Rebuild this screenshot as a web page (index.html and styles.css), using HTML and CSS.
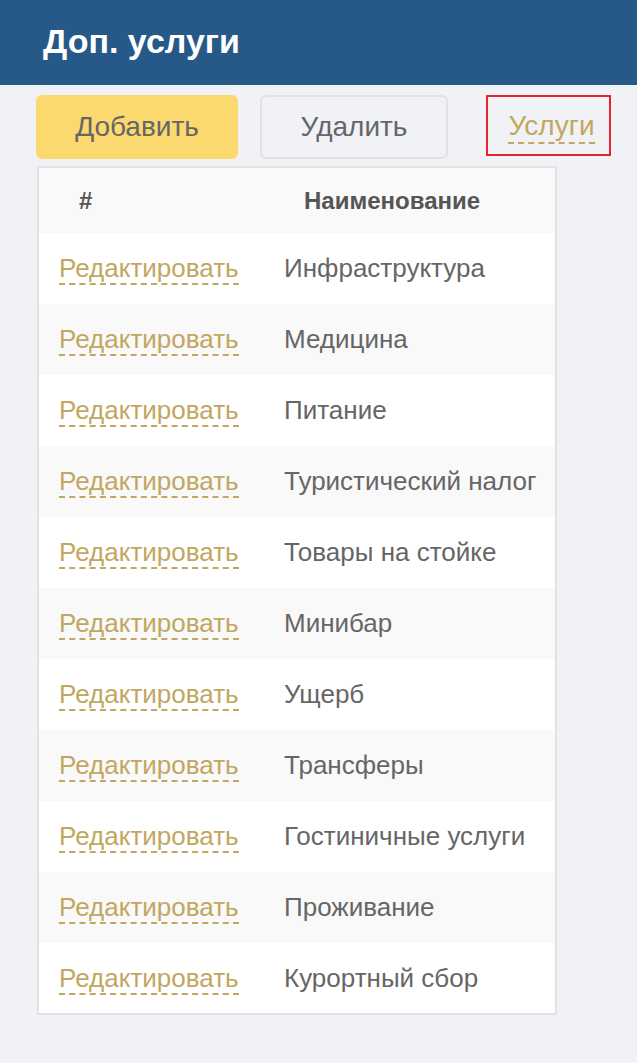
FILE: index.html
```html
<!DOCTYPE html>
<html lang="ru">
<head>
<meta charset="utf-8">
<link rel="stylesheet" href="styles.css">
</head>
<body>
<header class="topbar"><h1 class="title">Доп. услуги</h1></header>
<main class="content">
  <div class="toolbar">
    <button class="btn btn-add">Добавить</button>
    <button class="btn btn-del">Удалить</button>
    <div class="svc-box"><span class="link svc-link">Услуги</span></div>
  </div>
  <table class="grid">
    <thead>
      <tr><th class="col-num">#</th><th class="col-name">Наименование</th></tr>
    </thead>
    <tbody>
      <tr><td class="col-num"><span class="link">Редактировать</span></td><td class="col-name">Инфраструктура</td></tr>
      <tr><td class="col-num"><span class="link">Редактировать</span></td><td class="col-name">Медицина</td></tr>
      <tr><td class="col-num"><span class="link">Редактировать</span></td><td class="col-name">Питание</td></tr>
      <tr><td class="col-num"><span class="link">Редактировать</span></td><td class="col-name">Туристический налог</td></tr>
      <tr><td class="col-num"><span class="link">Редактировать</span></td><td class="col-name">Товары на стойке</td></tr>
      <tr><td class="col-num"><span class="link">Редактировать</span></td><td class="col-name">Минибар</td></tr>
      <tr><td class="col-num"><span class="link">Редактировать</span></td><td class="col-name">Ущерб</td></tr>
      <tr><td class="col-num"><span class="link">Редактировать</span></td><td class="col-name">Трансферы</td></tr>
      <tr><td class="col-num"><span class="link">Редактировать</span></td><td class="col-name">Гостиничные услуги</td></tr>
      <tr><td class="col-num"><span class="link">Редактировать</span></td><td class="col-name">Проживание</td></tr>
      <tr><td class="col-num"><span class="link">Редактировать</span></td><td class="col-name">Курортный сбор</td></tr>
    </tbody>
  </table>
</main>
</body>
</html>
```

FILE: styles.css
```css
* { box-sizing: border-box; }
html, body { margin: 0; padding: 0; }
body {
  background: #f1f2f6;
  font-family: "Liberation Sans", Arial, sans-serif;
  color: #666;
  width: 637px;
  min-height: 1063px;
}
.topbar {
  background: #265987;
  height: 85px;
  padding: 0 43px;
  display: flex;
  align-items: center;
}
.title {
  margin: 0;
  color: #fff;
  font-size: 34px;
  font-weight: bold;
  line-height: 1;
  padding-bottom: 4px;
}
.content { padding: 10px 0 0 36px; }
.toolbar {
  display: flex;
  align-items: flex-start;
  height: 71px;
}
.btn {
  font-family: inherit;
  font-size: 28px;
  color: #666;
  height: 64px;
  border-radius: 6px;
  cursor: pointer;
  padding: 0;
}
.btn-add {
  width: 202px;
  background: #fcd96f;
  border: 2px solid #fcd96f;
}
.btn-del {
  margin-left: 22px;
  width: 188px;
  background: #f1f2f6;
  border: 2px solid #e1e2e6;
}
.svc-box {
  margin-left: 38px;
  width: 125px;
  height: 61px;
  border: 2px solid #e8212e;
  display: flex;
  align-items: center;
  justify-content: center;
  padding: 4px 0 0 6px;
}
.link {
  color: #c2a760;
  border-bottom: 2px dashed #c2a760;
  line-height: 1.1;
}
.svc-link { font-size: 28px; }
.grid {
  margin-left: 1px;
  width: 520px;
  border-collapse: collapse;
  border: 2px solid #e1e2e6;
  background: #fff;
  font-size: 26px;
}
.grid th {
  height: 66px;
  background: #f9f9f9;
  font-size: 24px;
  font-weight: bold;
  color: #555;
  text-align: left;
  padding: 0;
}
.grid th.col-num { padding-left: 40px; }
.grid th.col-name { padding-left: 41px; }
.grid td {
  height: 71px;
  padding: 0;
  vertical-align: middle;
}
.grid tbody tr:nth-child(even) { background: #f9f9f9; }
.grid .col-num { width: 225px; }
.grid td.col-num { padding-left: 20px; }
.grid td.col-name { padding-left: 21px; color: #666; white-space: nowrap; }
```
